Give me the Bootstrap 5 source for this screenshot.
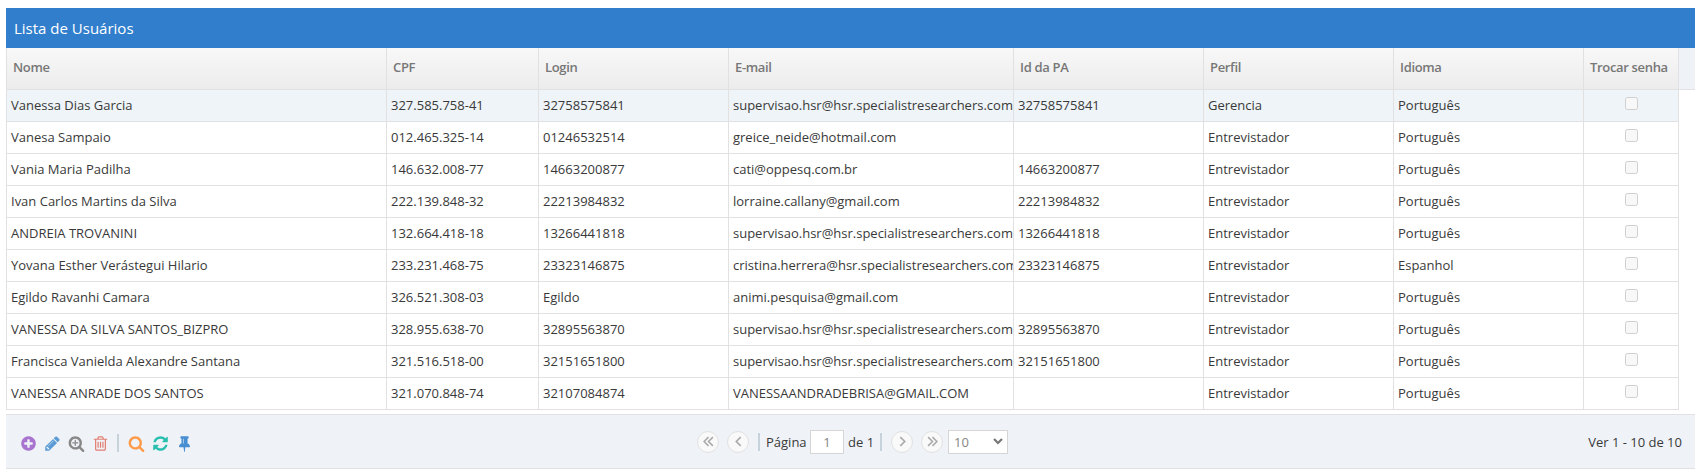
<!DOCTYPE html>
<html lang="pt-BR">
<head>
<meta charset="utf-8">
<title>Lista de Usuários</title>
<link href="https://cdn.jsdelivr.net/npm/bootstrap@5.3.0/dist/css/bootstrap.min.css" rel="stylesheet">
<style>
body{font-family:"Open Sans",sans-serif;font-size:13px;line-height:20px;color:#393939;background:#fff;overflow:hidden}
.user-grid{margin:8px 0 0 6px;height:461px}
.grid-title{height:40px;background:#307ecc;color:#fff;font-size:15px;padding:0 8px 1px}
.grid-head{height:42px;background:#eff3f8;border-bottom:1px solid #e1e1e1}
.grid-table{table-layout:fixed;width:1673px;border-collapse:separate;border-spacing:0;border-left:1px solid #e1e1e1}
.grid-table th{height:41px;padding:0 0 4px 6px;color:#777;font-weight:600;letter-spacing:-.33px;background:linear-gradient(#f8f8f8,#ececec);border-right:1px solid #e1e1e1;vertical-align:middle;white-space:nowrap}
.grid-table td{height:32px;padding:0 0 2px 4px;border-right:1px solid #e1e1e1;border-bottom:1px solid #e1e1e1;vertical-align:middle;white-space:nowrap;overflow:hidden}
.grid-table td:last-child{padding-bottom:0}
.row-hover td{background:#eef4f7}
.grid-table .form-check-input{width:13px;height:13px;margin:0;border:1px solid #cfcfcf;border-radius:2.5px;background:#f8f8f8;opacity:1}
.check-wrap{height:31px;padding:7px 4px 0 0}
.grid-pager{height:55px;margin-top:4px;background:#eff3f8;border-top:1px solid #e1e1e1;border-bottom:1px solid #e1e1e1}
.tools{width:691px;padding:3px 0 0 13.5px}
.tools svg{width:17px;height:17px;margin-right:7px;display:block;flex:none}
.tool-sep{width:2px;height:18px;background:#c6d3db;margin:0 8.5px 0 1.5px}
.pg-btn{width:22px;height:22px;border:1px solid #e1e1e1;border-radius:50%;background:#f9f9f9;color:#aaa;padding:0}
.pg-sep{width:2px;height:18px;background:#c6d3db}
.pg-label{width:44px}
.pg-total{width:36px;padding-left:4px;white-space:nowrap}
.pg-input{width:34px;height:24px;border:1px solid #d5d5d5;border-radius:0;color:#858585;font-size:13px;text-align:center;padding:0;background:#fff}
.pg-select{width:60px;height:24px;border:1px solid #d5d5d5;border-radius:0;color:#858585;background:#fff;padding:0 4px 0 5px}
</style>
<script src="https://cdn.jsdelivr.net/npm/bootstrap@5.3.0/dist/js/bootstrap.bundle.min.js"></script>
</head>
<body>
<main class="user-grid d-flex flex-column">
<div class="grid-title d-flex align-items-center">Lista de Usuários</div>
<div class="grid-head">
<table class="grid-table"><colgroup><col style="width:380px"><col style="width:152px"><col style="width:190px"><col style="width:285px"><col style="width:190px"><col style="width:190px"><col style="width:190px"><col style="width:95px"></colgroup>
<thead><tr><th>Nome</th><th>CPF</th><th>Login</th><th>E-mail</th><th>Id da PA</th><th>Perfil</th><th>Idioma</th><th>Trocar senha</th></tr></thead></table>
</div>
<table class="grid-table"><colgroup><col style="width:380px"><col style="width:152px"><col style="width:190px"><col style="width:285px"><col style="width:190px"><col style="width:190px"><col style="width:190px"><col style="width:95px"></colgroup>
<tbody>
<tr class="row-hover"><td>Vanessa Dias Garcia</td><td>327.585.758-41</td><td>32758575841</td><td>supervisao.hsr@hsr.specialistresearchers.com</td><td>32758575841</td><td>Gerencia</td><td>Português</td><td><div class="check-wrap d-flex justify-content-center"><input class="form-check-input" type="checkbox" disabled></div></td></tr>
<tr><td>Vanesa Sampaio</td><td>012.465.325-14</td><td>01246532514</td><td>greice_neide@hotmail.com</td><td></td><td>Entrevistador</td><td>Português</td><td><div class="check-wrap d-flex justify-content-center"><input class="form-check-input" type="checkbox" disabled></div></td></tr>
<tr><td>Vania Maria Padilha</td><td>146.632.008-77</td><td>14663200877</td><td>cati@oppesq.com.br</td><td>14663200877</td><td>Entrevistador</td><td>Português</td><td><div class="check-wrap d-flex justify-content-center"><input class="form-check-input" type="checkbox" disabled></div></td></tr>
<tr><td>Ivan Carlos Martins da Silva</td><td>222.139.848-32</td><td>22213984832</td><td>lorraine.callany@gmail.com</td><td>22213984832</td><td>Entrevistador</td><td>Português</td><td><div class="check-wrap d-flex justify-content-center"><input class="form-check-input" type="checkbox" disabled></div></td></tr>
<tr><td>ANDREIA TROVANINI</td><td>132.664.418-18</td><td>13266441818</td><td>supervisao.hsr@hsr.specialistresearchers.com</td><td>13266441818</td><td>Entrevistador</td><td>Português</td><td><div class="check-wrap d-flex justify-content-center"><input class="form-check-input" type="checkbox" disabled></div></td></tr>
<tr><td>Yovana Esther Verástegui Hilario</td><td>233.231.468-75</td><td>23323146875</td><td>cristina.herrera@hsr.specialistresearchers.com</td><td>23323146875</td><td>Entrevistador</td><td>Espanhol</td><td><div class="check-wrap d-flex justify-content-center"><input class="form-check-input" type="checkbox" disabled></div></td></tr>
<tr><td>Egildo Ravanhi Camara</td><td>326.521.308-03</td><td>Egildo</td><td>animi.pesquisa@gmail.com</td><td></td><td>Entrevistador</td><td>Português</td><td><div class="check-wrap d-flex justify-content-center"><input class="form-check-input" type="checkbox" disabled></div></td></tr>
<tr><td>VANESSA DA SILVA SANTOS_BIZPRO</td><td>328.955.638-70</td><td>32895563870</td><td>supervisao.hsr@hsr.specialistresearchers.com</td><td>32895563870</td><td>Entrevistador</td><td>Português</td><td><div class="check-wrap d-flex justify-content-center"><input class="form-check-input" type="checkbox" disabled></div></td></tr>
<tr><td>Francisca Vanielda Alexandre Santana</td><td>321.516.518-00</td><td>32151651800</td><td>supervisao.hsr@hsr.specialistresearchers.com</td><td>32151651800</td><td>Entrevistador</td><td>Português</td><td><div class="check-wrap d-flex justify-content-center"><input class="form-check-input" type="checkbox" disabled></div></td></tr>
<tr><td>VANESSA ANRADE DOS SANTOS</td><td>321.070.848-74</td><td>32107084874</td><td>VANESSAANDRADEBRISA@GMAIL.COM</td><td></td><td>Entrevistador</td><td>Português</td><td><div class="check-wrap d-flex justify-content-center"><input class="form-check-input" type="checkbox" disabled></div></td></tr>
</tbody></table>
<div class="grid-pager d-flex align-items-center">
<div class="tools d-flex align-items-center">
<svg viewBox="0 0 1792 1792" fill="#a874cf"><path d="M1344 960v-128q0-26-19-45t-45-19h-256v-256q0-26-19-45t-45-19h-128q-26 0-45 19t-19 45v256h-256q-26 0-45 19t-19 45v128q0 26 19 45t45 19h256v256q0 26 19 45t45 19h128q26 0 45-19t19-45v-256h256q26 0 45-19t19-45zm320-64q0 209-103 385.500t-279.500 279.500-385.500 103-385.500-103-279.500-279.500-103-385.500 103-385.500 279.500-279.500 385.500-103 385.500 103 279.500 279.500 103 385.500z"/></svg>
<svg viewBox="0 0 1792 1792" fill="#5b9bd5"><path d="M491 1536l91-91-235-235-91 91v107h128v128h107zm523-928q0-22-22-22-10 0-17 7l-542 542q-7 7-7 17 0 22 22 22 10 0 17-7l542-542q7-7 7-17zm-54-192l416 416-832 832h-416v-416zm683 96q0 53-37 90l-166 166-416-416 166-165q36-38 90-38 53 0 91 38l235 234q37 39 37 91z"/></svg>
<svg viewBox="0 0 1792 1792" fill="#888"><path d="M1088 800v64q0 13-9.500 22.500t-22.500 9.500h-224v224q0 13-9.500 22.500t-22.500 9.500h-64q-13 0-22.500-9.500t-9.500-22.500v-224h-224q-13 0-22.500-9.500t-9.500-22.500v-64q0-13 9.500-22.500t22.500-9.500h224v-224q0-13 9.500-22.500t22.500-9.500h64q13 0 22.500 9.500t9.500 22.500v224h224q13 0 22.500 9.500t9.500 22.500zm128 32q0-185-131.500-316.500t-316.500-131.500-316.500 131.500-131.500 316.500 131.500 316.500 316.500 131.500 316.500-131.500 131.500-316.500zm512 832q0 53-37.500 90.500t-90.500 37.500q-54 0-90-38l-343-342q-179 124-399 124-143 0-273.500-55.500t-225-150-150-225-55.500-273.500 55.500-273.500 150-225 225-150 273.500-55.500 273.500 55.500 225 150 150 225 55.500 273.500q0 220-124 399l343 343q37 37 37 90z"/></svg>
<svg viewBox="0 0 1792 1792" fill="#e27f72"><path d="M704 736v576q0 14-9 23t-23 9h-64q-14 0-23-9t-9-23v-576q0-14 9-23t23-9h64q14 0 23 9t9 23zm256 0v576q0 14-9 23t-23 9h-64q-14 0-23-9t-9-23v-576q0-14 9-23t23-9h64q14 0 23 9t9 23zm256 0v576q0 14-9 23t-23 9h-64q-14 0-23-9t-9-23v-576q0-14 9-23t23-9h64q14 0 23 9t9 23zm128 724v-948h-896v948q0 22 7 40.500t14.500 27 10.500 8.500h832q3 0 10.500-8.500t14.500-27 7-40.500zm-672-1076h448l-48-117q-7-9-17-11h-317q-10 2-17 11zm928 32v64q0 14-9 23t-23 9h-96v948q0 83-47 143.500t-113 60.500h-832q-66 0-113-58.500t-47-141.500v-952h-96q-14 0-23-9t-9-23v-64q0-14 9-23t23-9h309l70-167q15-37 54-63t79-26h320q40 0 79 26t54 63l70 167h309q14 0 23 9t9 23z"/></svg>
<span class="tool-sep"></span>
<svg viewBox="0 0 1792 1792" fill="#ff9a4a"><path d="M1216 832q0-185-131.500-316.500t-316.500-131.500-316.500 131.500-131.500 316.500 131.500 316.500 316.500 131.500 316.500-131.500 131.500-316.500zm512 832q0 53-37.500 90.500t-90.500 37.500q-54 0-90-38l-343-342q-179 124-399 124-143 0-273.500-55.500t-225-150-150-225-55.500-273.500 55.500-273.500 150-225 225-150 273.500-55.500 273.500 55.500 225 150 150 225 55.500 273.500q0 220-124 399l343 343q37 37 37 90z"/></svg>
<svg viewBox="0 0 1792 1792" fill="#28bfae"><path d="M1639 1056q0 5-1 7-64 268-268 434.500t-478 166.500q-146 0-282.500-55t-243.500-157l-129 129q-19 19-45 19t-45-19-19-45v-448q0-26 19-45t45-19h448q26 0 45 19t19 45-19 45l-137 137q71 66 161 102t187 36q134 0 250-65t186-179q11-17 53-117 8-23 30-23h192q13 0 22.500 9.500t9.500 22.500zm25-800v448q0 26-19 45t-45 19h-448q-26 0-45-19t-19-45 19-45l138-138q-148-137-349-137-134 0-250 65t-186 179q-11 17-53 117-8 23-30 23h-199q-13 0-22.500-9.500t-9.500-22.500v-7q65-268 270-434.500t480-166.500q146 0 284 55.500t245 156.500l130-129q19-19 45-19t45 19 19 45z"/></svg>
<svg viewBox="0 0 1792 1792" fill="#478fd2"><path d="M800 864v-448q0-14-9-23t-23-9-23 9-9 23v448q0 14 9 23t23 9 23-9 9-23zm672 352q0 26-19 45t-45 19h-429l-51 483q-2 12-10.500 20.500t-20.500 8.500h-1q-27 0-32-27l-76-485h-404q-26 0-45-19t-19-45q0-123 78.500-221.500t177.500-98.500v-512q-52 0-90-38t-38-90 38-90 90-38h640q52 0 90 38t38 90-38 90-90 38v512q99 0 177.500 98.500t78.500 221.500z"/></svg>
</div>
<div class="d-flex align-items-center">
<button class="pg-btn d-flex align-items-center justify-content-center" aria-label="Primeira"><svg width="11" height="11" viewBox="0 0 10 10" fill="none" stroke="currentColor" stroke-width="1.4"><path d="M5 1 1 5l4 4M9 1 5 5l4 4"/></svg></button>
<button class="pg-btn d-flex align-items-center justify-content-center ms-2" aria-label="Anterior"><svg width="11" height="11" viewBox="0 0 10 10" fill="none" stroke="currentColor" stroke-width="1.5"><path d="M7 1 3 5l4 4"/></svg></button>
<span class="pg-sep" style="margin:0 6px 0 9px"></span>
<span class="pg-label">Página</span>
<input class="pg-input" value="1" aria-label="Página">
<span class="pg-total">de 1</span>
<span class="pg-sep" style="margin-right:9px"></span>
<button class="pg-btn d-flex align-items-center justify-content-center" aria-label="Próxima"><svg width="11" height="11" viewBox="0 0 10 10" fill="none" stroke="currentColor" stroke-width="1.5"><path d="m3 1 4 4-4 4"/></svg></button>
<button class="pg-btn d-flex align-items-center justify-content-center ms-2" aria-label="Última"><svg width="11" height="11" viewBox="0 0 10 10" fill="none" stroke="currentColor" stroke-width="1.4"><path d="m1 1 4 4-4 4M5 1l4 4-4 4"/></svg></button>
<div class="pg-select d-flex align-items-center justify-content-between" style="margin-left:5px">10<svg width="10" height="7" fill="none" stroke="#777" stroke-width="2.2"><path d="m1 1 4 4 4-4"/></svg></div>
</div>
<div class="ms-auto" style="padding-right:13px">Ver 1 - 10 de 10</div>
</div>
</main>
</body>
</html>
